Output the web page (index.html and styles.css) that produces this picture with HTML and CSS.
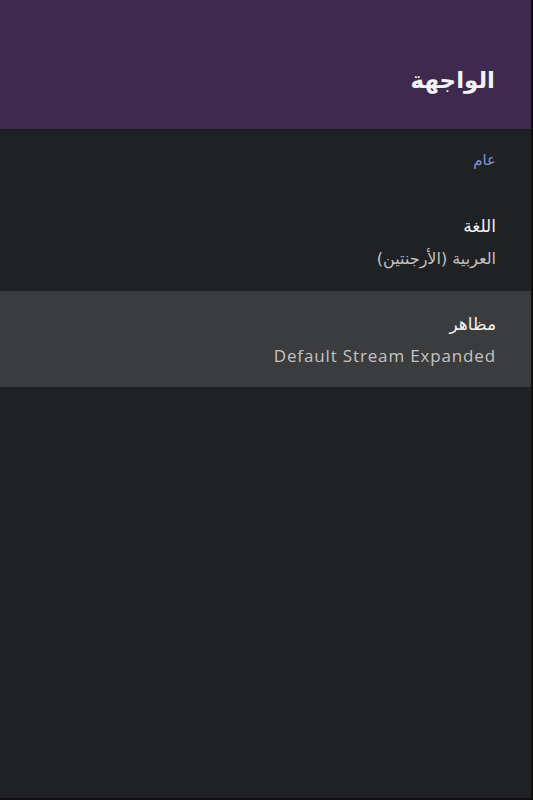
FILE: index.html
```html
<!DOCTYPE html>
<html lang="ar">
<head>
<meta charset="utf-8">
<link rel="stylesheet" href="styles.css">
</head>
<body>
<div class="screen">
  <div class="panel" dir="rtl">
    <header class="header"><h1 class="title">الواجهة</h1></header>
    <div class="section-label">عام</div>
    <div class="row">
      <div class="row-title">اللغة</div>
      <div class="row-sub">العربية (الأرجنتين)</div>
    </div>
    <div class="row row-active">
      <div class="row-title">مظاهر</div>
      <div class="row-sub latin">Default Stream Expanded</div>
    </div>
  </div>
</div>
</body>
</html>
```
FILE: styles.css
```css
html, body { margin: 0; padding: 0; background: #0e0e0f; }
body { font-family: "DejaVu Sans", "Noto Sans", sans-serif; }
.screen { width: 533px; height: 800px; display: flex; direction: ltr; }
.panel { width: 531px; height: 798px; background: #202124; display: flex; flex-direction: column; direction: rtl; }
.header { height: 130px; background: #3e2a4f; border-bottom: 1px solid #1a1a1c; box-sizing: border-box; display: flex; align-items: flex-end; padding: 0 36px 33px 0; }
.title { margin: 0; font-size: 23px; font-weight: bold; color: #f2f2f2; line-height: 32px; }
.section-label { color: #8292d3; font-size: 15px; padding: 20px 35px 0 0; line-height: 20px; height: 42px; box-sizing: border-box; }
.row { display: flex; flex-direction: column; padding: 42px 35px 0 0; height: 119px; box-sizing: border-box; }
.row-active { background: #3b3c3e; height: 96px; padding-top: 21px; }
.row-title { color: #f2f2f2; font-size: 17px; line-height: 24px; }
.row-sub { color: #c4c4c4; font-size: 16px; line-height: 20px; margin-top: 11px; }
.latin { font-family: "Open Sans", "Noto Sans", sans-serif; font-size: 17px; letter-spacing: 0.85px; margin-top: 10px; }
```
